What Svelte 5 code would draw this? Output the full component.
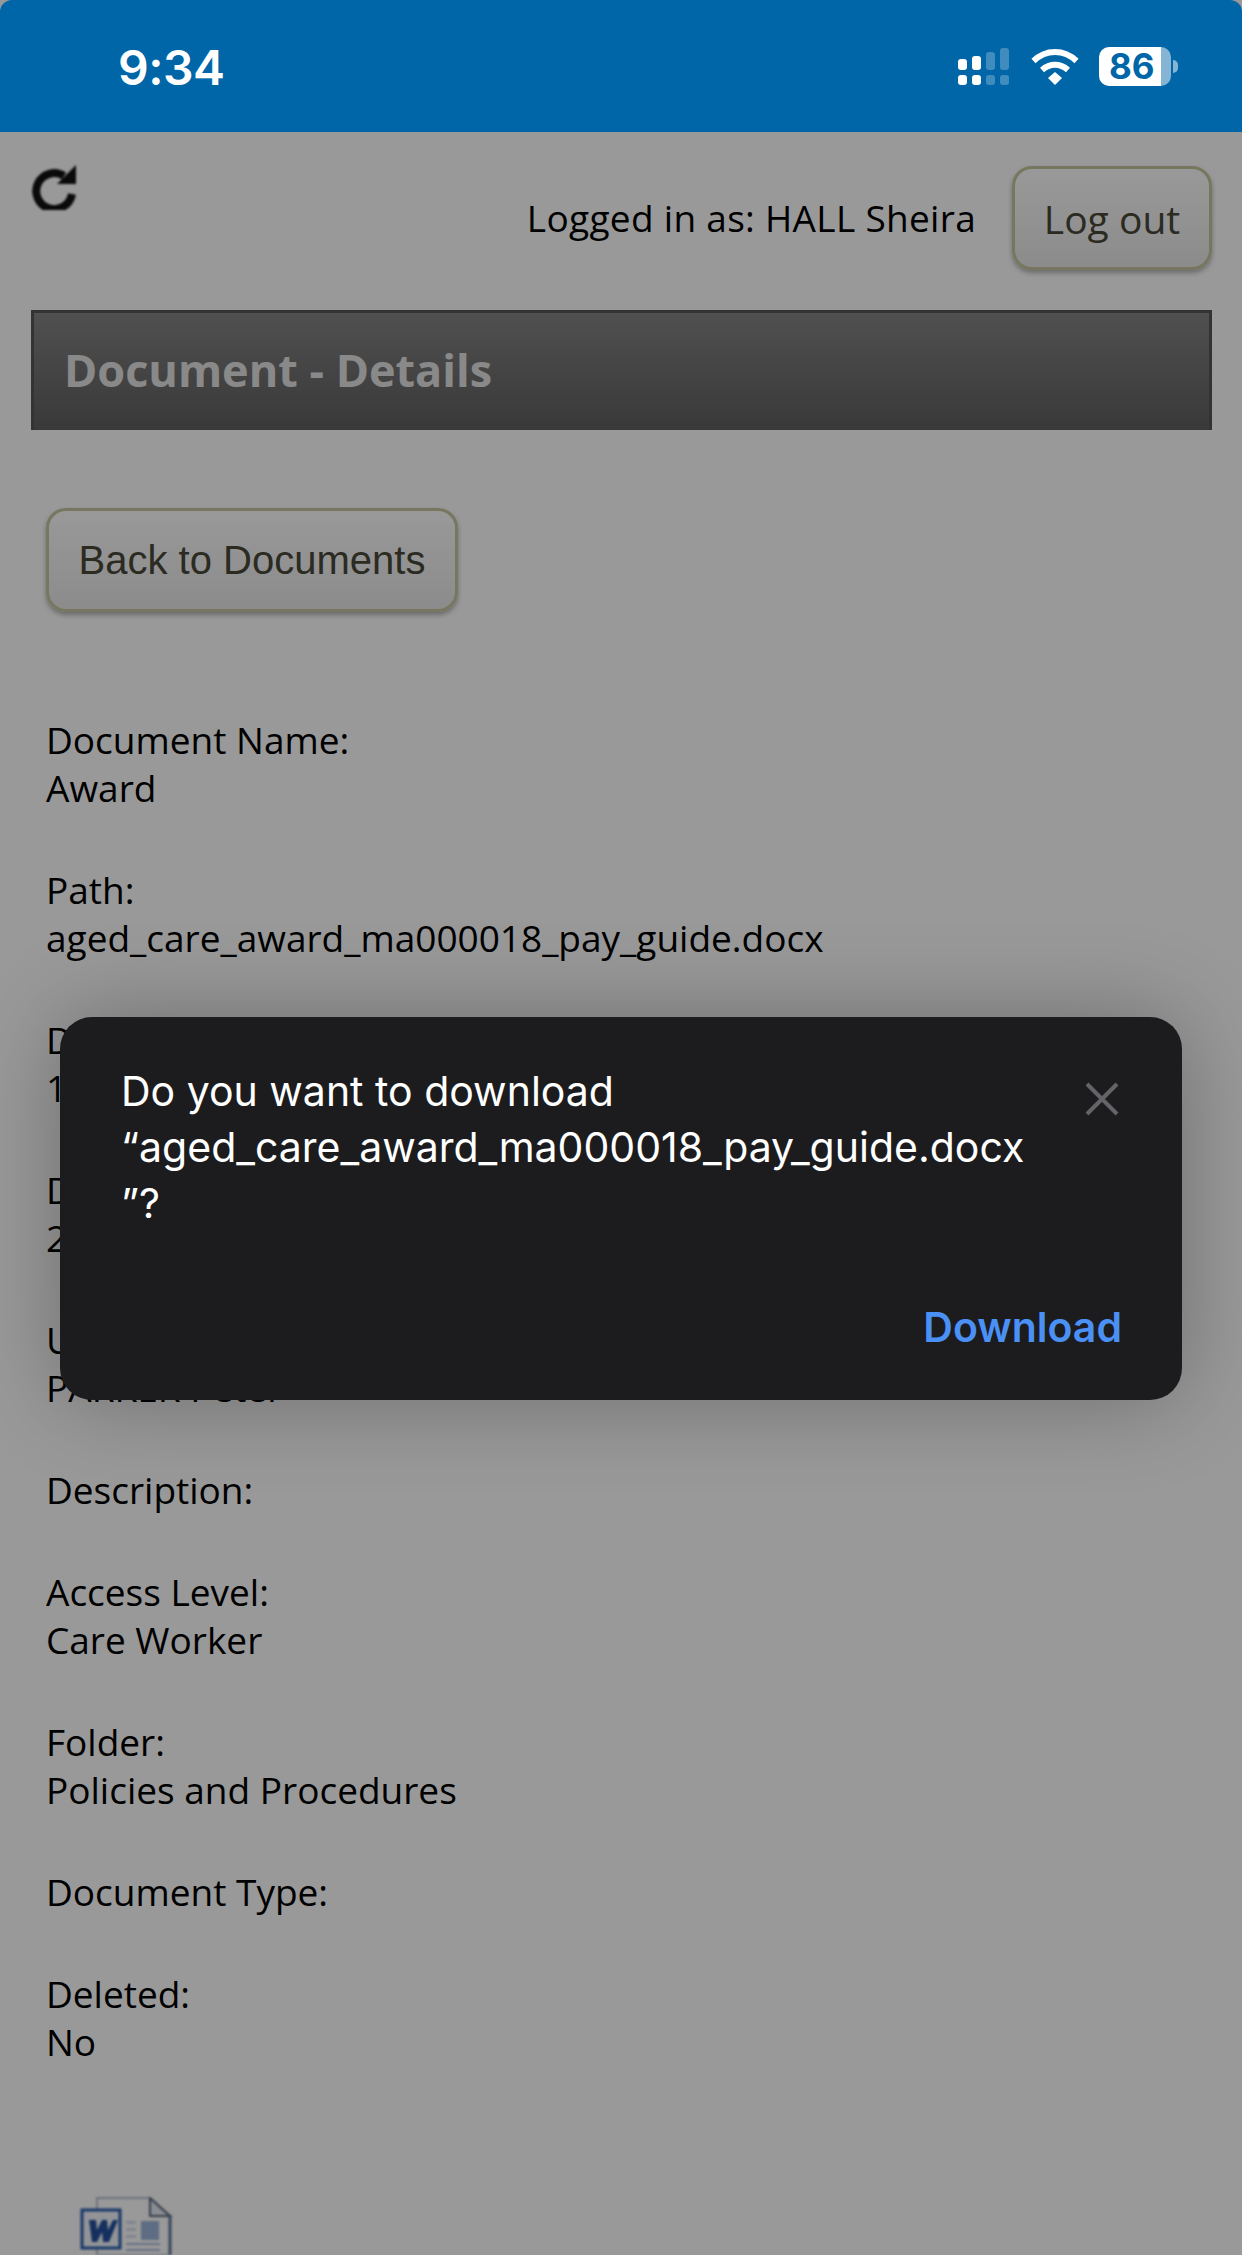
<script lang="ts">
	const fields = [
		{ label: 'Document Name:', value: 'Award' },
		{ label: 'Path:', value: 'aged_care_award_ma000018_pay_guide.docx' },
		{ label: 'Document ID:', value: '1' },
		{ label: 'Date Uploaded:', value: '2' },
		{ label: 'Uploaded By:', value: 'PARKER Peter' },
		{ label: 'Description:', value: '' },
		{ label: 'Access Level:', value: 'Care Worker' },
		{ label: 'Folder:', value: 'Policies and Procedures' },
		{ label: 'Document Type:', value: '' },
		{ label: 'Deleted:', value: 'No' }
	];
</script>

<div class="screen">
	<header class="status">
		<span class="time">9:34</span>
		<div class="status-icons">
			<svg class="signal" width="51" height="37" viewBox="0 0 51 37" fill="#fff">
				<rect x="0" y="11" width="9" height="11" rx="3" />
				<rect x="14" y="8" width="9" height="14" rx="3" />
				<rect x="28" y="4" width="9" height="18" rx="3" opacity="0.25" />
				<rect x="42" y="0" width="9" height="22" rx="3" opacity="0.25" />
				<rect x="0" y="27" width="9" height="10" rx="3" />
				<rect x="14" y="27" width="9" height="10" rx="3" />
				<rect x="28" y="27" width="9" height="10" rx="3" opacity="0.25" />
				<rect x="42" y="27" width="9" height="10" rx="3" opacity="0.25" />
			</svg>
			<svg class="wifi" width="48" height="37" viewBox="0 0 48 37" fill="none" stroke="#fff" stroke-width="6">
				<path d="M2.5 13 C15 1, 33 1, 45.500 13" />
				<path d="M11 22 C19 15, 29 15, 37 22" />
				<path d="M17 30 L24 24 L31 30 L24 37 Z" fill="#fff" stroke="none" />
			</svg>
			<div class="battery">
				<div class="battery-body"><span>86</span></div>
				<div class="battery-nub"></div>
			</div>
		</div>
	</header>

	<main class="page">
		<div class="topbar">
			<svg class="refresh" width="46" height="46" viewBox="0 0 46 46" fill="none">
				<path d="M32 12 A18 18 0 1 0 40 30" stroke="#111" stroke-width="8" />
				<path d="M44 1 V20 H25 Z" fill="#111" />
			</svg>
			<div class="user">
				<span class="who">Logged in as: HALL Sheira</span>
				<button class="btn logout">Log out</button>
			</div>
		</div>

		<h1 class="title">Document - Details</h1>

		<div class="content">
			<button class="btn back">Back to Documents</button>

			<div class="fields">
				{#each fields as field}
					<div class="field">
						<div>{field.label}</div>
						{#if field.value}<div>{field.value}</div>{/if}
					</div>
				{/each}
			</div>

			<svg class="word-icon" width="94" height="58" viewBox="0 0 94 58">
				<path d="M17 1 H70 L90 19 V58 H17 Z" fill="#fff" stroke="#b5c0d0" stroke-width="2" />
				<path d="M70 1 V19 H90 Z" fill="#e4e9f1" stroke="#5c6a80" stroke-width="2" />
				<path d="M90 18 V58" stroke="#5e7396" stroke-width="3" />
				<rect x="61" y="24" width="18" height="19" fill="#9db6db" />
				<rect x="46" y="24" width="10" height="3" fill="#d5dfef" />
				<rect x="46" y="31" width="10" height="3" fill="#d5dfef" />
				<rect x="46" y="38" width="10" height="3" fill="#d5dfef" />
				<rect x="46" y="46" width="34" height="2" fill="#a9bddb" />
				<rect x="46" y="52" width="34" height="2" fill="#a9bddb" />
				<rect x="2" y="13" width="38" height="38" fill="#f3f6fb" stroke="#2a5db0" stroke-width="3" />
				<path d="M9 23 H16 L17 33 L22 23 H27 L28 33 L33 23 H38 L29 45 H23 L22 35 L17 45 H12 Z" fill="#24509f" />
			</svg>
		</div>
	</main>

	<div class="overlay"></div>

	<div class="dialog">
		<div class="dialog-top">
			<p>Do you want to download<br />“aged_care_award_ma000018_pay_guide.docx<br />”?</p>
			<svg class="close" width="34" height="34" viewBox="0 0 34 34" stroke="#636368" stroke-width="4" fill="none">
				<path d="M2 2 L32 32 M32 2 L2 32" />
			</svg>
		</div>
		<div class="dialog-actions">
			<span class="download">Download</span>
		</div>
	</div>
</div>

<style>
	:global(body) {
		background: #fff;
	}

	.screen {
		position: relative;
		width: 1242px;
		height: 2255px;
		overflow: hidden;
		background: #fff;
	}

	.status {
		position: relative;
		z-index: 2;
		height: 132px;
		box-sizing: border-box;
		padding: 0 64px 0 118px;
		background: #0066a8;
		border-radius: 12px 12px 0 0;
		display: flex;
		align-items: center;
		justify-content: space-between;
		color: #fff;
	}

	.time {
		font-family: Inter, sans-serif;
		font-size: 48px;
		font-weight: 600;
		letter-spacing: -0.5px;
		position: relative;
		top: 1px;
	}

	.status-icons {
		display: flex;
		align-items: center;
		gap: 20px;
	}

	.signal {
		margin-right: 2px;
	}

	.battery {
		display: flex;
		align-items: center;
		gap: 2px;
	}

	.battery-body {
		width: 72px;
		height: 39px;
		box-sizing: border-box;
		padding-left: 10px;
		border-radius: 10px;
		background: linear-gradient(to right, #fff 86%, #86b4d4 86%);
		color: #0066a8;
		font-family: Inter, sans-serif;
		font-size: 35px;
		font-weight: 700;
		line-height: 39px;
	}

	.battery-nub {
		width: 5px;
		height: 13px;
		background: #86b4d4;
		border-radius: 0 5px 5px 0;
	}

	.page {
		font-family: "Open Sans", sans-serif;
		font-size: 37px;
		line-height: 48px;
		color: #000;
	}

	.topbar {
		display: flex;
		justify-content: space-between;
		align-items: flex-start;
		padding: 34px 30px 0 32px;
	}

	.refresh {
		margin-top: -2px;
		filter: blur(0.9px);
	}

	.user {
		display: flex;
		align-items: center;
		gap: 36px;
	}

	.who {
		letter-spacing: 0.3px;
	}

	.btn {
		box-sizing: border-box;
		height: 104px;
		padding: 0;
		border: 3px solid #c6c69e;
		border-radius: 20px;
		background: linear-gradient(to bottom, #fff, #e9e9e9);
		box-shadow: 0 3px 5px rgba(0, 0, 0, 0.3);
		color: #48483a;
		font-size: 39px;
	}

	.logout {
		width: 200px;
		font-family: "Open Sans", sans-serif;
	}

	.back {
		width: 412px;
		font-family: "Liberation Sans", sans-serif;
		font-size: 40px;
	}

	.title {
		box-sizing: border-box;
		height: 120px;
		margin: 40px 30px 0 31px;
		padding: 0 30px;
		border: 3px solid #555;
		border-bottom: 0;
		background: linear-gradient(to bottom, #858585, #606060);
		color: #e4e4e4;
		font-family: "Open Sans", sans-serif;
		font-size: 45px;
		font-weight: 700;
		line-height: 114px;
	}

	.content {
		padding: 78px 46px 0;
	}

	.fields {
		display: flex;
		flex-direction: column;
		gap: 54px;
		margin-top: 104px;
	}

	.word-icon {
		display: block;
		margin: 131px 0 0 34px;
		filter: blur(1.2px);
	}

	.overlay {
		position: absolute;
		inset: 0;
		z-index: 1;
		background: rgba(0, 0, 0, 0.4);
	}

	.dialog {
		position: absolute;
		left: 60px;
		top: 1017px;
		z-index: 3;
		box-sizing: border-box;
		width: 1122px;
		height: 383px;
		padding: 46px 60px 0 61px;
		border-radius: 32px;
		background: #1c1c1e;
		box-shadow: 0 0 90px rgba(0, 0, 0, 0.28);
		color: #fff;
		font-family: Inter, sans-serif;
	}

	.dialog-top {
		display: flex;
		justify-content: space-between;
		align-items: flex-start;
	}

	.dialog-top p {
		margin: 0;
		font-size: 41px;
		line-height: 56px;
		white-space: nowrap;
	}

	.close {
		margin: 19px 3px 0 0;
		flex: none;
	}

	.dialog-actions {
		display: flex;
		justify-content: flex-end;
		margin-top: 68px;
	}

	.download {
		color: #4a90f5;
		font-size: 41px;
		font-weight: 600;
		line-height: 56px;
	}
</style>
